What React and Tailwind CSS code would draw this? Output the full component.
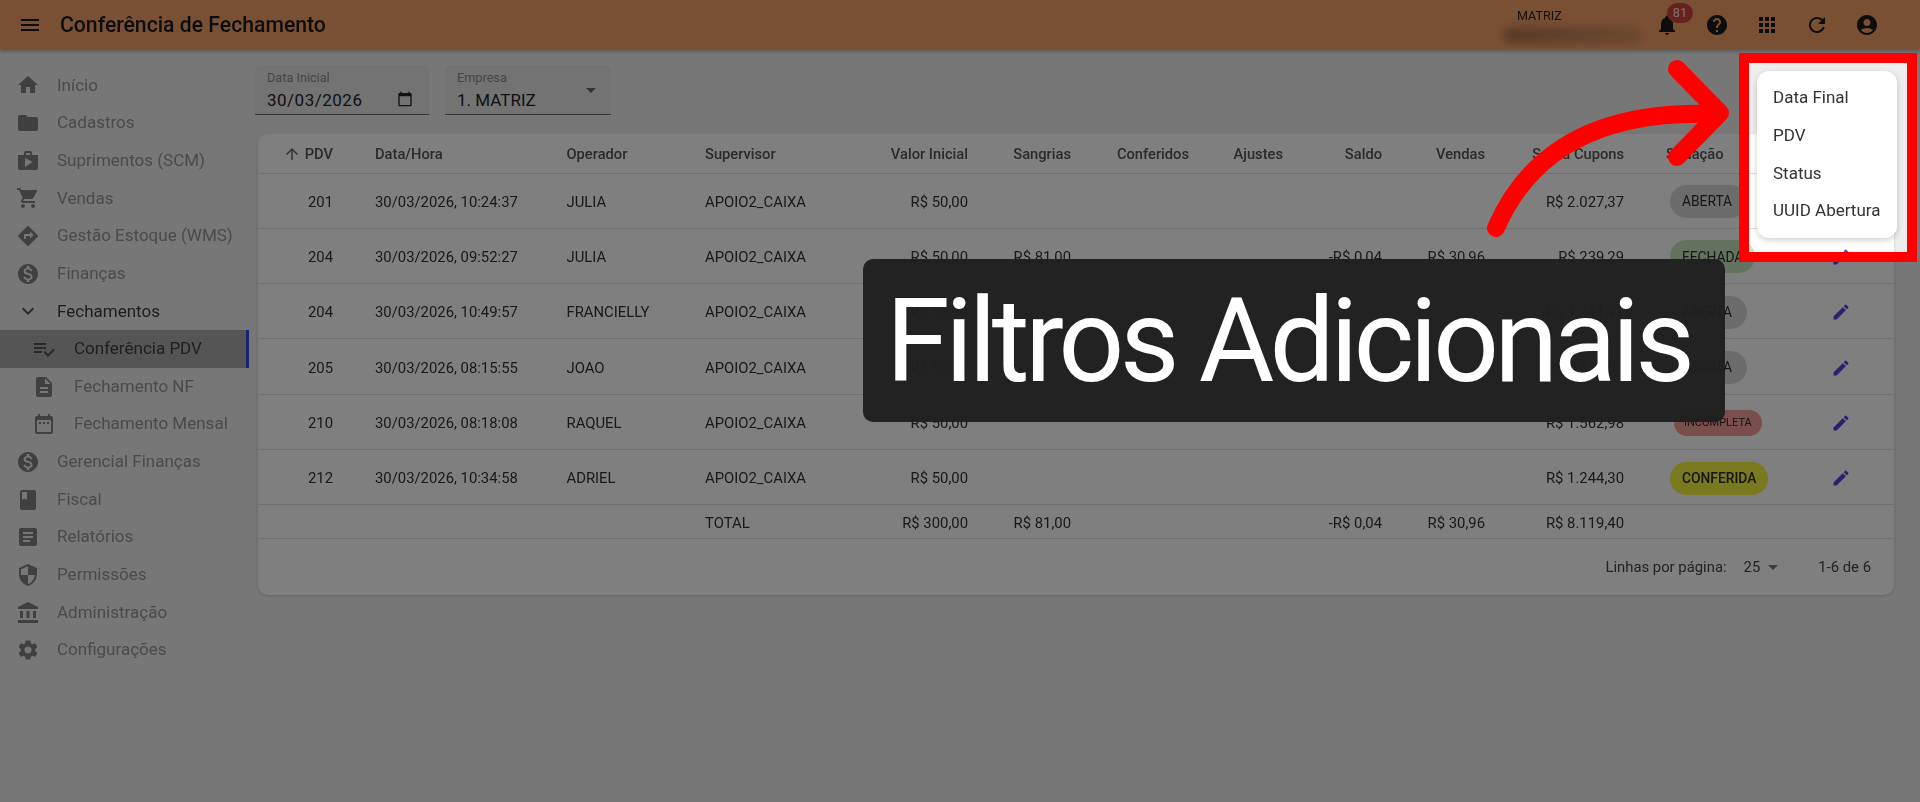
const ICONS = {
  menu: "M3 18h18v-2H3v2zm0-5h18v-2H3v2zm0-7v2h18V6H3z",
  home: "M10 20v-6h4v6h5v-8h3L12 3 2 12h3v8z",
  folder: "M10 4H4c-1.1 0-1.99.9-1.99 2L2 18c0 1.1.9 2 2 2h16c1.1 0 2-.9 2-2V8c0-1.1-.9-2-2-2h-8l-2-2z",
  shop: "M16 6V4c0-1.11-.89-2-2-2h-4c-1.11 0-2 .89-2 2v2H2v13c0 1.11.89 2 2 2h16c1.11 0 2-.89 2-2V6h-6zm-6-2h4v2h-4V4zM9 18V9l7.5 4L9 18z",
  cart: "M7 18c-1.1 0-1.99.9-1.99 2S5.9 22 7 22s2-.9 2-2-.9-2-2-2zM1 2v2h2l3.6 7.59-1.35 2.45c-.16.28-.25.61-.25.96 0 1.1.9 2 2 2h12v-2H7.42c-.14 0-.25-.11-.25-.25l.03-.12.9-1.63h7.45c.75 0 1.41-.41 1.75-1.03l3.58-6.49c.08-.14.12-.31.12-.48 0-.55-.45-1-1-1H5.21l-.94-2H1zm16 16c-1.1 0-1.99.9-1.99 2s.89 2 1.99 2 2-.9 2-2-.9-2-2-2z",
  directions: "M21.71 11.29l-9-9c-.39-.39-1.02-.39-1.41 0l-9 9c-.39.39-.39 1.02 0 1.41l9 9c.39.39 1.02.39 1.41 0l9-9c.39-.38.39-1.01 0-1.41zM14 14.5V12h-4v3H8v-4c0-.55.45-1 1-1h5V7.5l3.5 3.5-3.5 3.5z",
  money: "M12 2C6.48 2 2 6.48 2 12s4.48 10 10 10 10-4.48 10-10S17.52 2 12 2zm1.41 16.09V20h-2.67v-1.93c-1.71-.36-3.16-1.46-3.27-3.4h1.96c.1 1.05.82 1.87 2.65 1.87 1.96 0 2.4-.98 2.4-1.59 0-.83-.44-1.61-2.67-2.14-2.48-.6-4.18-1.62-4.18-3.67 0-1.72 1.39-2.84 3.11-3.21V4h2.67v1.95c1.86.45 2.79 1.86 2.85 3.39H14.3c-.05-1.11-.64-1.87-2.22-1.87-1.5 0-2.4.68-2.4 1.64 0 .84.65 1.39 2.67 1.91s4.18 1.39 4.18 3.91c-.01 1.83-1.38 2.83-3.12 3.16z",
  expand: "M16.59 8.59 12 13.17 7.41 8.59 6 10l6 6 6-6z",
  playlist: "M14 10H2v2h12v-2zm0-4H2v2h12V6zM2 16h8v-2H2v2zm19.5-4.5L23 13l-6.99 7-4.51-4.5L13 14l3.01 3 5.49-5.5z",
  description: "M14 2H6c-1.1 0-1.99.9-1.99 2L4 20c0 1.1.89 2 1.99 2H18c1.1 0 2-.9 2-2V8l-6-6zm2 16H8v-2h8v2zm0-4H8v-2h8v2zm-3-5V3.5L18.5 9H13z",
  month: "M19 4h-1V2h-2v2H8V2H6v2H5c-1.11 0-1.99.9-1.99 2L3 20c0 1.1.89 2 2 2h14c1.1 0 2-.9 2-2V6c0-1.1-.9-2-2-2zm0 16H5V8h14v12zM9 12H7v-2h2v2zm4 0h-2v-2h2v2zm4 0h-2v-2h2v2z",
  book: "M18 2H6c-1.1 0-2 .9-2 2v16c0 1.1.9 2 2 2h12c1.1 0 2-.9 2-2V4c0-1.1-.9-2-2-2zM6 4h5v8l-2.5-1.5L6 12V4z",
  article: "M19 3H5c-1.1 0-2 .9-2 2v14c0 1.1.9 2 2 2h14c1.1 0 2-.9 2-2V5c0-1.1-.9-2-2-2zm-5 14H7v-2h7v2zm3-4H7v-2h10v2zm0-4H7V7h10v2z",
  security: "M12 1 3 5v6c0 5.55 3.84 10.74 9 12 5.16-1.26 9-6.45 9-12V5l-9-4zm0 10.99h7c-.53 4.12-3.28 7.79-7 8.94V12H5V6.3l7-3.11v8.8z",
  bank: "M4 10h3v7H4zM10.5 10h3v7h-3zM2 19h20v3H2zM17 10h3v7h-3zM12 1 2 6v2h20V6z",
  settings: "M19.14 12.94c.04-.3.06-.61.06-.94 0-.32-.02-.64-.07-.94l2.03-1.58c.18-.14.23-.41.12-.61l-1.92-3.32c-.12-.22-.37-.29-.59-.22l-2.39.96c-.5-.38-1.03-.7-1.62-.94l-.36-2.54c-.04-.24-.24-.41-.48-.41h-3.84c-.24 0-.43.17-.47.41l-.36 2.54c-.59.24-1.13.57-1.62.94l-2.39-.96c-.22-.08-.47 0-.59.22L2.74 8.87c-.12.21-.08.47.12.61l2.03 1.58c-.05.3-.09.63-.09.94s.02.64.07.94l-2.03 1.58c-.18.14-.23.41-.12.61l1.92 3.32c.12.22.37.29.59.22l2.39-.96c.5.38 1.03.7 1.62.94l.36 2.54c.05.24.24.41.48.41h3.84c.24 0 .44-.17.47-.41l.36-2.54c.59-.24 1.13-.56 1.62-.94l2.39.96c.22.08.47 0 .59-.22l1.92-3.32c.12-.22.07-.47-.12-.61l-2.01-1.58zM12 15.6c-1.98 0-3.6-1.62-3.6-3.6s1.62-3.6 3.6-3.6 3.6 1.62 3.6 3.6-1.62 3.6-3.6 3.6z",
  bell: "M12 22c1.1 0 2-.9 2-2h-4c0 1.1.89 2 2 2zm6-6v-5c0-3.07-1.64-5.64-4.5-6.32V4c0-.83-.67-1.5-1.5-1.5s-1.5.67-1.5 1.5v.68C7.63 5.36 6 7.92 6 11v5l-2 2v1h16v-1l-2-2z",
  help: "M12 2C6.48 2 2 6.48 2 12s4.48 10 10 10 10-4.48 10-10S17.52 2 12 2zm1 17h-2v-2h2v2zm2.07-7.75-.9.92C13.45 12.9 13 13.5 13 15h-2v-.5c0-1.1.45-2.1 1.17-2.83l1.24-1.26c.37-.36.59-.86.59-1.41 0-1.1-.9-2-2-2s-2 .9-2 2H8c0-2.21 1.79-4 4-4s4 1.79 4 4c0 .88-.36 1.68-.93 2.25z",
  apps: "M4 8h4V4H4v4zm6 12h4v-4h-4v4zm-6 0h4v-4H4v4zm0-6h4v-4H4v4zm6 0h4v-4h-4v4zm6-10v4h4V4h-4zm-6 4h4V4h-4v4zm6 6h4v-4h-4v4zm0 6h4v-4h-4v4z",
  refresh: "M17.65 6.35C16.2 4.9 14.21 4 12 4c-4.42 0-7.99 3.58-7.99 8s3.57 8 7.99 8c3.73 0 6.84-2.55 7.73-6h-2.08c-.82 2.33-3.04 4-5.65 4-3.31 0-6-2.69-6-6s2.69-6 6-6c1.66 0 3.14.69 4.22 1.78L13 11h7V4l-2.35 2.35z",
  account: "M12 2C6.48 2 2 6.48 2 12s4.48 10 10 10 10-4.48 10-10S17.52 2 12 2zm0 4c1.93 0 3.5 1.57 3.5 3.5S13.93 13 12 13s-3.5-1.57-3.5-3.5S10.07 6 12 6zm0 14c-2.03 0-4.43-.82-6.14-2.88C7.55 15.8 9.68 15 12 15s4.45.8 6.14 2.12C16.43 19.18 14.03 20 12 20z",
  edit: "M3 17.25V21h3.75L17.81 9.94l-3.75-3.75L3 17.25zM20.71 7.04c.39-.39.39-1.02 0-1.41l-2.34-2.34a.9959.9959 0 0 0-1.41 0l-1.83 1.83 3.75 3.75 1.83-1.83z",
  arrowUp: "M4 12l1.41 1.41L11 7.83V20h2V7.83l5.58 5.59L20 12l-8-8-8 8z",
  dropDown: "M7 10l5 5 5-5z",
  calendar: "M20 3h-1V1h-2v2H7V1H5v2H4c-1.1 0-2 .9-2 2v16c0 1.1.9 2 2 2h16c1.1 0 2-.9 2-2V5c0-1.1-.9-2-2-2zm0 18H4V8h16v13z",
};

const Icon = ({ name, size = 24, className = "" }) => (
  <svg viewBox="0 0 24 24" width={size} height={size} fill="currentColor" className={className}>
    <path d={ICONS[name]} />
  </svg>
);

const NAV = [
  { icon: "home", label: "Início" },
  { icon: "folder", label: "Cadastros" },
  { icon: "shop", label: "Suprimentos (SCM)" },
  { icon: "cart", label: "Vendas" },
  { icon: "directions", label: "Gestão Estoque (WMS)" },
  { icon: "money", label: "Finanças" },
  { icon: "expand", label: "Fechamentos", open: true },
  { icon: "playlist", label: "Conferência PDV", sub: true, active: true },
  { icon: "description", label: "Fechamento NF", sub: true },
  { icon: "month", label: "Fechamento Mensal", sub: true },
  { icon: "money", label: "Gerencial Finanças" },
  { icon: "book", label: "Fiscal" },
  { icon: "article", label: "Relatórios" },
  { icon: "security", label: "Permissões" },
  { icon: "bank", label: "Administração" },
  { icon: "settings", label: "Configurações" },
];

const ROWS = [
  { pdv: 201, data: "30/03/2026, 10:24:37", op: "JULIA", soma: "R$ 2.027,37", status: "ABERTA" },
  { pdv: 204, data: "30/03/2026, 09:52:27", op: "JULIA", sangria: "R$ 81,00", saldo: "-R$ 0,04", vendas: "R$ 30,96", soma: "R$ 239,29", status: "FECHADA" },
  { pdv: 204, data: "30/03/2026, 10:49:57", op: "FRANCIELLY", soma: "R$ 1.211,91", status: "ABERTA" },
  { pdv: 205, data: "30/03/2026, 08:15:55", op: "JOAO", soma: "R$ 1.833,55", status: "ABERTA" },
  { pdv: 210, data: "30/03/2026, 08:18:08", op: "RAQUEL", soma: "R$ 1.562,98", status: "INCOMPLETA" },
  { pdv: 212, data: "30/03/2026, 10:34:58", op: "ADRIEL", soma: "R$ 1.244,30", status: "CONFERIDA" },
];

const CHIP = {
  ABERTA: "h-[33px] pl-3 pr-[15px] text-[13.8px] bg-[#d9d9d9]",
  FECHADA: "h-[33px] px-3 text-[13.8px] bg-[#c8e6c0]",
  INCOMPLETA: "ml-[4px] h-[26px] px-[10px] text-[11px] bg-[#f49c96]",
  CONFERIDA: "h-[33px] px-3 text-[13.8px] font-medium bg-[#f2f23e]",
};

const HEAD = "border-b border-[#e0e0e0] pt-[2px] font-medium text-[#555555] text-[14.7px]";
const CELL = "border-b border-[#e0e0e0] pt-[2px] text-[#333333] text-[14.85px]";

function Sidebar() {
  return (
    <nav className="w-[249px] shrink-0 pt-[17.5px]">
      {NAV.map((item) => (
        <div
          key={item.label}
          className={`flex h-[37.67px] items-center text-[17px] ${item.active ? "bg-[#ababab] border-r-[3px] border-[#3444dd]" : ""}`}
        >
          <span className={`flex justify-center ${item.sub ? "w-[74px] pl-[32px] pr-[18px]" : "w-[57px] pl-[16px] pr-[17px]"} ${item.open || item.active ? "text-[#555555]" : "text-[#808080]"}`}>
            <Icon name={item.icon} />
          </span>
          <span className={item.open || item.active ? "text-[#3c3c3c]" : "text-[#949494]"}>{item.label}</span>
        </div>
      ))}
    </nav>
  );
}

function Field({ label, value, icon, className, valueClass }) {
  return (
    <div className={`relative h-[50px] rounded-t-[6px] border-b border-[#6a6a6a] bg-[#e6e6e6] pl-3 ${className}`}>
      <div className="pt-[6px] text-[12.7px] leading-[14px] text-[#8a8a8a]">{label}</div>
      <div className={`mt-[4px] text-[17px] leading-[22px] text-[#222222] ${valueClass}`}>{value}</div>
      {icon}
    </div>
  );
}

function Table() {
  return (
    <div className="overflow-hidden rounded-[10px] bg-white shadow-[0_1px_3px_rgba(0,0,0,0.15)] w-[1636px] h-[461px]">
      <table className="w-[1636px] table-fixed border-collapse text-left">
        <colgroup>
          <col className="w-[101px]" />
          <col className="w-[191.5px]" />
          <col className="w-[138.5px]" />
          <col className="w-[151px]" />
          <col className="w-[144px]" />
          <col className="w-[103px]" />
          <col className="w-[118px]" />
          <col className="w-[94px]" />
          <col className="w-[99px]" />
          <col className="w-[103px]" />
          <col className="w-[139px]" />
          <col className="w-[180px]" />
          <col className="w-[74px]" />
        </colgroup>
        <thead>
          <tr className="h-[39px]">
            <th className={`${HEAD} pr-[26px]`}>
              <span className="flex items-center justify-end gap-[4px]">
                <Icon name="arrowUp" size={18} className="text-[#666666]" />
                PDV
              </span>
            </th>
            <th className={`${HEAD} pl-4`}>Data/Hora</th>
            <th className={`${HEAD} pl-4`}>Operador</th>
            <th className={`${HEAD} pl-4`}>Supervisor</th>
            <th className={`${HEAD} pr-4 text-right`}>Valor Inicial</th>
            <th className={`${HEAD} pr-4 text-right`}>Sangrias</th>
            <th className={`${HEAD} pr-4 text-right`}>Conferidos</th>
            <th className={`${HEAD} pr-4 text-right`}>Ajustes</th>
            <th className={`${HEAD} pr-4 text-right`}>Saldo</th>
            <th className={`${HEAD} pr-4 text-right`}>Vendas</th>
            <th className={`${HEAD} pr-4 text-right`}>Soma Cupons</th>
            <th className={`${HEAD} pl-[26px]`}>Situação</th>
            <th className={HEAD}></th>
          </tr>
        </thead>
        <tbody>
          {ROWS.map((r) => (
            <tr key={r.data} className="h-[55.33px]">
              <td className={`${CELL} pr-[26px] text-right`}>{r.pdv}</td>
              <td className={`${CELL} pl-4`}>{r.data}</td>
              <td className={`${CELL} pl-4`}>{r.op}</td>
              <td className={`${CELL} pl-4`}>APOIO2_CAIXA</td>
              <td className={`${CELL} pr-4 text-right`}>R$ 50,00</td>
              <td className={`${CELL} pr-4 text-right`}>{r.sangria}</td>
              <td className={`${CELL} pr-4 text-right`}></td>
              <td className={`${CELL} pr-4 text-right`}></td>
              <td className={`${CELL} pr-4 text-right`}>{r.saldo}</td>
              <td className={`${CELL} pr-4 text-right`}>{r.vendas}</td>
              <td className={`${CELL} pr-4 text-right`}>{r.soma}</td>
              <td className={`${CELL} pl-[30px]`}>
                <span className={`inline-flex items-center rounded-full text-[#2a2a2a] ${CHIP[r.status]}`}>{r.status}</span>
              </td>
              <td className={`${CELL} pl-[11px]`}>
                <Icon name="edit" size={20} className="text-[#5a3fe0]" />
              </td>
            </tr>
          ))}
          <tr className="h-[34px]">
            <td className={CELL}></td>
            <td className={CELL}></td>
            <td className={CELL}></td>
            <td className={`${CELL} pl-4`}>TOTAL</td>
            <td className={`${CELL} pr-4 text-right`}>R$ 300,00</td>
            <td className={`${CELL} pr-4 text-right`}>R$ 81,00</td>
            <td className={CELL}></td>
            <td className={CELL}></td>
            <td className={`${CELL} pr-4 text-right`}>-R$ 0,04</td>
            <td className={`${CELL} pr-4 text-right`}>R$ 30,96</td>
            <td className={`${CELL} pr-4 text-right`}>R$ 8.119,40</td>
            <td className={CELL}></td>
            <td className={CELL}></td>
          </tr>
        </tbody>
      </table>
      <div className="flex h-[55px] items-center justify-end pr-[23px] text-[14.85px] text-[#444444]">
        <span>Linhas por página:</span>
        <span className="ml-[17px]">25</span>
        <Icon name="dropDown" size={24} className="ml-[1px] text-[#777777]" />
        <span className="ml-[33px]">1-6 de 6</span>
      </div>
    </div>
  );
}

function TopBar() {
  return (
    <header className="relative z-10 flex h-[49px] items-center bg-[#f5a06b] pl-[18px] text-[#1a1a1a] shadow-[0_2px_4px_rgba(0,0,0,0.3)]">
      <Icon name="menu" />
      <h1 className="ml-[18px] text-[21.2px] font-medium">Conferência de Fechamento</h1>
      <div className="ml-auto flex items-center pr-[28px]">
        <div className="w-[139px] pt-[3px]">
          <div className="pl-[14px] text-[12.6px] leading-[14px] text-[#222222]">MATRIZ</div>
          <div className="mt-[3px] h-[18px] w-[139px] rounded-full bg-gradient-to-r from-[#b4764c] to-[#d8925f] blur-[4px]"></div>
        </div>
        <div className="relative flex w-[50px] justify-center">
          <Icon name="bell" />
          <span className="absolute left-[25px] top-[-10px] flex h-[20px] min-w-[26px] items-center justify-center rounded-full bg-[#d3433a] text-[12.7px] text-[#f2e0d8]">81</span>
        </div>
        <div className="flex w-[50px] justify-center"><Icon name="help" /></div>
        <div className="flex w-[50px] justify-center"><Icon name="apps" /></div>
        <div className="flex w-[50px] justify-center"><Icon name="refresh" /></div>
        <div className="flex w-[50px] justify-center"><Icon name="account" /></div>
      </div>
    </header>
  );
}

export default function App() {
  return (
    <div className="relative h-[802px] w-[1920px] overflow-hidden bg-[#eeeeee] font-['Roboto',sans-serif]">
      <div className="h-full blur-[0.6px]">
        <TopBar />
        <div className="flex">
          <Sidebar />
          <main className="pl-[6px] pt-[16px]">
            <div className="flex gap-[16.5px]">
              <Field
                label="Data Inicial"
                value="30/03/2026"
                className="w-[173.5px]"
                valueClass="tracking-[0.5px]"
                icon={<Icon name="calendar" size={16} className="absolute right-[15.5px] top-[26px] text-[#222222]" />}
              />
              <Field
                label="Empresa"
                value="1. MATRIZ"
                className="w-[166px]"
                icon={<Icon name="dropDown" size={24} className="absolute right-[8px] top-[13px] text-[#666666]" />}
              />
            </div>
            <div className="ml-[3px] mt-[19px]">
              <Table />
            </div>
          </main>
        </div>
        {/* menu aberto, fica dentro do recorte */}
        <div className="absolute left-[1757px] top-[71px] flex h-[167px] w-[140px] flex-col justify-center rounded-[12px] bg-white pl-[16px] text-[17px] text-[#333333] shadow-[0_2px_6px_rgba(0,0,0,0.2)]">
          {["Data Final", "PDV", "Status", "UUID Abertura"].map((t) => (
            <div key={t} className="flex h-[37.67px] items-center whitespace-nowrap">{t}</div>
          ))}
        </div>
      </div>

      {/* recorte vermelho com o escurecimento em volta */}
      <div className="absolute left-[1739px] top-[53px] h-[209px] w-[178px] border-[10px] border-[#ff0000] shadow-[0_0_0_2000px_rgba(0,0,0,0.5)]"></div>

      <svg className="absolute left-[1480px] top-[50px]" width="270" height="200" viewBox="0 0 270 200" fill="none" stroke="#ff0000" strokeWidth="18" strokeLinecap="round" strokeLinejoin="round">
        <path d="M16 178C50 100 120 60 234 64" />
        <path d="M197 19L240 63L197 107" />
      </svg>

      <div className="absolute left-[863px] top-[259px] flex h-[163px] w-[862px] items-center justify-center rounded-[10px] bg-[#1f1f1f]/[0.97] pr-[12px]">
        <span className="whitespace-nowrap text-[116px] leading-none tracking-[-4.8px] text-white">Filtros Adicionais</span>
      </div>
    </div>
  );
}
